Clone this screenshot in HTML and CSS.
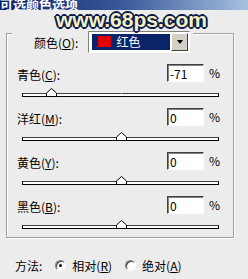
FILE: index.html
```html
<!DOCTYPE html>
<html>

<head>
    <meta name="viewport" content="width=device-width, initial-scale=1">
    <title>可选颜色选项</title>
    <link rel="stylesheet" href="styles.css">
</head>

<body>
    <div class="titlebar"><span class="title">可选颜色选项</span></div>
    <div class="watermark">www.68ps.com</div>

    <div class="group">
        <div class="group-head">
            <label class="head-label">颜色(<u>O</u>):</label>
            <div class="dropdown">
                <div class="dropdown-value"><span class="swatch"></span>红色</div>
                <div class="dropdown-btn"><span class="arrow"></span></div>
            </div>
        </div>

        <div class="row">
            <div class="row-head">
                <label class="row-label">青色(<u>C</u>):</label>
                <div class="num">-71</div>
                <span class="pct">%</span>
            </div>
            <div class="slider">
                <span class="tick"></span>
                <svg class="thumb" style="left: 14.5%" width="11" height="9" viewBox="0 0 11 9"><path d="M0.5 8.5V5L5.5 0.5L10.5 5V8.5Z" fill="#fff" stroke="#000"/></svg>
            </div>
        </div>

        <div class="row">
            <div class="row-head">
                <label class="row-label">洋红(<u>M</u>):</label>
                <div class="num">0</div>
                <span class="pct">%</span>
            </div>
            <div class="slider">
                <span class="tick"></span>
                <svg class="thumb" style="left: 50%" width="11" height="9" viewBox="0 0 11 9"><path d="M0.5 8.5V5L5.5 0.5L10.5 5V8.5Z" fill="#fff" stroke="#000"/></svg>
            </div>
        </div>

        <div class="row">
            <div class="row-head">
                <label class="row-label">黄色(<u>Y</u>):</label>
                <div class="num">0</div>
                <span class="pct">%</span>
            </div>
            <div class="slider">
                <span class="tick"></span>
                <svg class="thumb" style="left: 50%" width="11" height="9" viewBox="0 0 11 9"><path d="M0.5 8.5V5L5.5 0.5L10.5 5V8.5Z" fill="#fff" stroke="#000"/></svg>
            </div>
        </div>

        <div class="row">
            <div class="row-head">
                <label class="row-label">黑色(<u>B</u>):</label>
                <div class="num">0</div>
                <span class="pct">%</span>
            </div>
            <div class="slider">
                <span class="tick"></span>
                <svg class="thumb" style="left: 50%" width="11" height="9" viewBox="0 0 11 9"><path d="M0.5 8.5V5L5.5 0.5L10.5 5V8.5Z" fill="#fff" stroke="#000"/></svg>
            </div>
        </div>
    </div>

    <div class="method">
        <span class="method-label">方法:</span>
        <span class="radio checked"></span>
        <span class="radio-text">相对(<u>R</u>)</span>
        <span class="radio"></span>
        <span class="radio-text">绝对(<u>A</u>)</span>
    </div>
</body>

</html>
```

FILE: styles.css
```css
body {
    margin: 0;
    width: 248px;
    height: 279px;
    overflow: hidden;
    position: relative;
    background-color: #ececec;
    font-family: "Noto Sans CJK SC", "Liberation Sans", sans-serif;
    font-size: 12px;
    color: #000;
}

u {
    text-decoration: underline;
    text-underline-offset: 1px;
}

.titlebar {
    height: 10px;
    overflow: hidden;
    background: linear-gradient(to right, #0a246a, #3a5a9c 50%, #a6c0e0);
}

.title {
    display: block;
    margin-top: -3px;
    line-height: 14px;
    font-size: 13px;
    font-weight: bold;
    color: #fff;
}

.watermark {
    position: absolute;
    left: 56px;
    top: 7px;
    font-family: "Liberation Sans", sans-serif;
    font-size: 21px;
    font-weight: bold;
    line-height: 26px;
    color: #f2f2c4;
    text-shadow: 1px 1px 0 #0c1a4c, -1px -1px 0 #0c1a4c, 1px -1px 0 #0c1a4c, -1px 1px 0 #0c1a4c,
        2px 0 0 #0c1a4c, -2px 0 0 #0c1a4c, 0 2px 0 #0c1a4c, 0 -2px 0 #0c1a4c;
}

.group {
    margin: 23px 14px 0 6px;
    padding: 0 12px 8px 10px;
    border: 1px solid #a0a0a0;
    box-shadow: inset 1px 1px #fff, 1px 1px #fff;
}

.group-head {
    display: inline-flex;
    align-items: center;
    margin: -6px 0 0 -5px;
    padding: 0 3px 0 22px;
    background-color: #ececec;
}

.head-label {
    padding-top: 2px;
    margin-right: 10px;
}

.dropdown {
    display: flex;
    width: 98px;
    height: 18px;
    padding: 1px;
    background-color: #fff;
    border: 1px solid;
    border-color: #808080 #fff #fff #808080;
}

.dropdown-value {
    flex: 1;
    display: flex;
    align-items: center;
    margin: 1px 1px 1px 2px;
    background-color: #0a246a;
    color: #fff;
}

.swatch {
    width: 13px;
    height: 11px;
    margin: 0 5px 0 6px;
    background-color: #e00000;
}

.dropdown-btn {
    display: flex;
    align-items: center;
    justify-content: center;
    width: 15px;
    background-color: #d4d0c8;
    border: 1px solid;
    border-color: #fff #404040 #404040 #fff;
}

.arrow {
    width: 0;
    height: 0;
    border-left: 3.5px solid transparent;
    border-right: 3.5px solid transparent;
    border-top: 4px solid #000;
}

.row {
    margin-top: 11px;
}

.row-head {
    display: flex;
    align-items: center;
    height: 18px;
}

.row-label {
    flex: 1;
    padding-top: 3px;
}

.num {
    box-sizing: border-box;
    width: 37px;
    height: 18px;
    padding: 1px 0 0 2px;
    line-height: 15px;
    background-color: #fff;
    border: 1px solid;
    border-color: #404040 #fff #fff #404040;
    box-shadow: inset 1px 1px #808080;
}

.pct {
    margin-left: 5px;
    margin-right: 1px;
}

.slider {
    position: relative;
    width: 195px;
    height: 2px;
    margin: 11px 0 0 5px;
    background-color: #fff;
    border: 1px solid #000;
    border-top-color: #404040;
}

.tick {
    position: absolute;
    left: 98px;
    top: -1px;
    width: 1px;
    height: 1px;
    background-color: #a0a0a0;
}

.thumb {
    position: absolute;
    bottom: -1px;
    margin-left: -5px;
}

.method {
    display: flex;
    align-items: center;
    margin: 20px 0 0 15px;
    height: 16px;
}

.method-label {
    margin-right: 13px;
}

.radio {
    position: relative;
    box-sizing: border-box;
    width: 11px;
    height: 11px;
    border-radius: 50%;
    background-color: #fff;
    border: 1px solid;
    border-color: #808080 #fff #fff #808080;
    box-shadow: inset 1px 1px #404040;
}

.radio.checked::after {
    content: "";
    position: absolute;
    left: 3px;
    top: 3px;
    width: 3px;
    height: 3px;
    border-radius: 50%;
    background-color: #000;
}

.radio-text {
    margin: 0 13px 0 6px;
}
```
